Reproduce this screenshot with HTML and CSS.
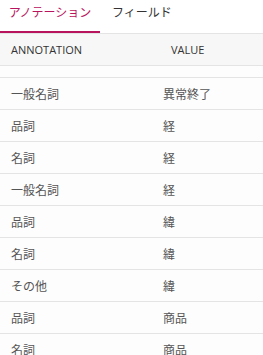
FILE: index.html
```html
<!DOCTYPE html>
<html lang="ja">

<head>
  <meta charset="UTF-8">
  <meta name="viewport" content="width=device-width, initial-scale=1.0">
  <title>アノテーション</title>
  <link rel="stylesheet" href="styles.css">
</head>

<body>
  <!-- タブ -->
  <div class="tabs">
    <a class="tab active" href="#annotation">アノテーション</a>
    <a class="tab" href="#field">フィールド</a>
  </div>

  <!-- アノテーション一覧 -->
  <div class="anno-list">
    <div class="row head">
      <span class="key">Annotation</span>
      <span class="value">Value</span>
    </div>
    <div class="row spacer"></div>
    <div class="row"><span class="key">一般名詞</span><span class="value">異常終了</span></div>
    <div class="row"><span class="key">品詞</span><span class="value">経</span></div>
    <div class="row"><span class="key">名詞</span><span class="value">経</span></div>
    <div class="row"><span class="key">一般名詞</span><span class="value">経</span></div>
    <div class="row"><span class="key">品詞</span><span class="value">緯</span></div>
    <div class="row"><span class="key">名詞</span><span class="value">緯</span></div>
    <div class="row"><span class="key">その他</span><span class="value">緯</span></div>
    <div class="row"><span class="key">品詞</span><span class="value">商品</span></div>
    <div class="row"><span class="key">名詞</span><span class="value">商品</span></div>
  </div>
</body>

</html>
```

FILE: styles.css
```css
:root {
  --accent: #b8145e;
  --line: #e4e4e4;
}

* {
  box-sizing: border-box;
  margin: 0;
  padding: 0;
}

body {
  font-family: "Open Sans", "Noto Sans CJK JP", sans-serif;
  background: #fdfdfd;
  color: #555;
}

/* タブ */
.tabs {
  display: flex;
  height: 34px;
  background: #fff;
  border-bottom: 1px solid var(--line);
}

.tab {
  font-size: 12px;
  line-height: 16px;
  padding: 5px 0 10px;
  text-decoration: none;
  color: #333;
  border-bottom: 2px solid transparent;
}

.tab.active {
  width: 100px;
  text-align: center;
  color: var(--accent);
  border-bottom-color: var(--accent);
}

.tab + .tab {
  padding-left: 12px;
}

/* 一覧 */
.row {
  display: flex;
  align-items: center;
  height: 32px;
  font-size: 12px;
  border-bottom: 1px solid var(--line);
}

.row.head {
  background: #f7f7f7;
  font-size: 11px;
  text-transform: uppercase;
  color: #333;
}

.row.spacer {
  height: 12px;
}

.key {
  width: 152px;
  padding-left: 11px;
}

.value {
  padding-left: 11px;
}

.head .value {
  padding-left: 19px;
}
```
